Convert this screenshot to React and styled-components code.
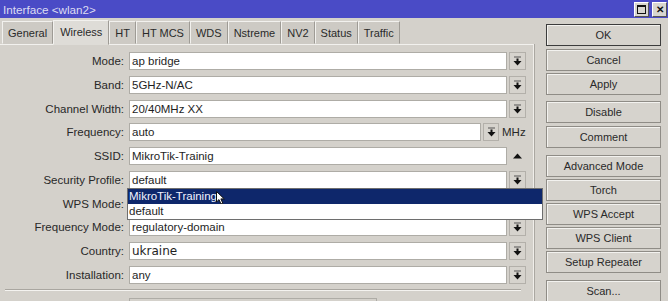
import React from 'react';
import styled, { createGlobalStyle } from 'styled-components';

const GlobalStyle = createGlobalStyle`
  html, body {
    margin: 0;
    padding: 0;
    background: #d4d1cb;
  }
  body {
    font-family: "Liberation Sans", Arial, sans-serif;
  }
`;

const tabs = ['General', 'Wireless', 'HT', 'HT MCS', 'WDS', 'Nstreme', 'NV2', 'Status', 'Traffic'];

const fields = [
    { label: 'Mode', value: 'ap bridge', kind: 'select' },
    { label: 'Band', value: '5GHz-N/AC', kind: 'select' },
    { label: 'Channel Width', value: '20/40MHz XX', kind: 'select' },
    { label: 'Frequency', value: 'auto', kind: 'freq' },
    { label: 'SSID', value: 'MikroTik-Trainig', kind: 'ssid' },
    { label: 'Security Profile', value: 'default', kind: 'select', open: true },
    { label: 'WPS Mode', value: '', kind: 'select' },
    { label: 'Frequency Mode', value: 'regulatory-domain', kind: 'select' },
    { label: 'Country', value: 'ukraine', kind: 'select', big: true },
    { label: 'Installation', value: 'any', kind: 'select', last: true },
];

const buttons = [
    { text: 'OK', after: 3, primary: true },
    { text: 'Cancel', after: 2 },
    { text: 'Apply', after: 6 },
    { text: 'Disable', after: 3 },
    { text: 'Comment', after: 7 },
    { text: 'Advanced Mode', after: 2 },
    { text: 'Torch', after: 2 },
    { text: 'WPS Accept', after: 2 },
    { text: 'WPS Client', after: 2 },
    { text: 'Setup Repeater', after: 7 },
    { text: 'Scan...', after: 0 },
];

const DownIcon = () => (
    <svg width="9" height="10" viewBox="0 0 9 10">
        <rect x="1" y="0.5" width="7" height="1" fill="#555" />
        <rect x="3.5" y="2.5" width="2" height="2.5" fill="#111" />
        <path d="M0.5 5 L8.5 5 L4.5 9.5 Z" fill="#111" />
    </svg>
);

const UpIcon = () => (
    <svg width="9" height="6" viewBox="0 0 9 6">
        <path d="M0 5.5 L9 5.5 L4.5 0.5 Z" fill="#111" />
    </svg>
);

const Cursor = () => (
    <svg width="10" height="14" viewBox="0 0 10 14">
        <path d="M0.5 0.5 L0.5 11 L3 8.6 L5 13 L6.8 12.2 L4.9 7.9 L8.3 7.9 Z" fill="#fff" stroke="#111" strokeWidth="1" />
    </svg>
);

function App() {
    return (
        <Window>
            <GlobalStyle />
            <TitleBar>
                <span>Interface &lt;wlan2&gt;</span>
                <TitleButtons>
                    <TitleButton><MaxBox /></TitleButton>
                    <TitleButton>✕</TitleButton>
                </TitleButtons>
            </TitleBar>
            <Body>
                <LeftPane>
                    <TabRow>
                        {tabs.map((t) => (
                            <Tab key={t} $active={t === 'Wireless'}>{t}</Tab>
                        ))}
                    </TabRow>
                    <Panel>
                        {fields.map((f) => (
                            <Row key={f.label} $tight={f.last}>
                                <Label>{f.label}:</Label>
                                <Field>
                                    <Input $big={f.big}>{f.value}</Input>
                                    {f.kind === 'select' && <DropButton><DownIcon /></DropButton>}
                                    {f.kind === 'freq' && (
                                        <>
                                            <DropButton $narrow><DownIcon /></DropButton>
                                            <Unit>MHz</Unit>
                                        </>
                                    )}
                                    {f.kind === 'ssid' && <ArrowSlot><UpIcon /></ArrowSlot>}
                                    {f.open && (
                                        <DropList>
                                            <DropItem $selected>
                                                MikroTik-Training
                                                <CursorSpot><Cursor /></CursorSpot>
                                            </DropItem>
                                            <DropItem>default</DropItem>
                                        </DropList>
                                    )}
                                </Field>
                            </Row>
                        ))}
                        <Separator />
                        <Row>
                            <Label>Default AP Tx Limit:</Label>
                            <Field>
                                <Input $disabled />
                            </Field>
                        </Row>
                    </Panel>
                </LeftPane>
                <ButtonColumn>
                    {buttons.map((b) => (
                        <SideButton key={b.text} $after={b.after} $primary={b.primary}>{b.text}</SideButton>
                    ))}
                </ButtonColumn>
            </Body>
        </Window>
    );
}

const Window = styled.div`
    width: 668px;
    height: 301px;
    overflow: hidden;
    display: flex;
    flex-direction: column;
    background: #d4d1cb;
    color: #242424;
`;

const TitleBar = styled.div`
    height: 18px;
    flex: none;
    display: flex;
    align-items: center;
    justify-content: space-between;
    padding: 0 1px 0 3px;
    background: #4a4bc6;
    color: #dcdcf2;
    font-size: 11.7px;
`;

const TitleButtons = styled.div`
    display: flex;
    gap: 3px;
`;

const TitleButton = styled.div`
    width: 15px;
    height: 15px;
    box-sizing: border-box;
    display: flex;
    align-items: center;
    justify-content: center;
    background: #d8d6d0;
    border: 1px solid;
    border-color: #fff #555 #555 #fff;
    color: #111;
    font-size: 10px;
    font-weight: bold;
`;

const MaxBox = styled.div`
    width: 9px;
    height: 9px;
    box-sizing: border-box;
    border: 1px solid #111;
    border-top-width: 2px;
`;

const Body = styled.div`
    flex: 1;
    display: flex;
    min-height: 0;
`;

const LeftPane = styled.div`
    width: 534px;
    flex: none;
    display: flex;
    flex-direction: column;
`;

const TabRow = styled.div`
    height: 26px;
    flex: none;
    display: flex;
    align-items: flex-end;
    padding-left: 2px;
`;

const Tab = styled.div`
    height: ${(p) => (p.$active ? '25px' : '23px')};
    box-sizing: border-box;
    display: flex;
    align-items: center;
    padding: ${(p) => (p.$active ? '0 6px 2px' : '0 5px')};
    background: ${(p) => (p.$active ? '#dedcd7' : '#cdcac4')};
    border: 1px solid;
    border-color: #f2f1ee #9e9b95 transparent #f2f1ee;
    font-size: 11px;
    color: #2a2a2a;
    position: relative;
    margin-bottom: ${(p) => (p.$active ? '-1px' : '0')};
    z-index: ${(p) => (p.$active ? 1 : 0)};
`;

const Panel = styled.div`
    flex: 1;
    border-top: 1px solid #f2f1ee;
    border-right: 1px solid #f0eeea;
    box-shadow: 1px 0 0 #aaa7a1;
    padding: 7px 7px 0 0;
    display: flex;
    flex-direction: column;
`;

const Row = styled.div`
    display: grid;
    grid-template-columns: 124px 1fr;
    column-gap: 5px;
    height: 18px;
    flex: none;
    margin-bottom: ${(p) => (p.$tight ? '1px' : '5.75px')};
`;

const Label = styled.div`
    text-align: right;
    line-height: 18px;
    font-size: 11.5px;
    white-space: nowrap;
    color: #282828;
`;

const Field = styled.div`
    display: flex;
    align-items: center;
    gap: 2px;
    height: 18px;
    position: relative;
`;

const Input = styled.div`
    flex: ${(p) => (p.$disabled ? '0 0 248px' : '1')};
    height: 18px;
    box-sizing: border-box;
    padding: 0 2px;
    background: ${(p) => (p.$disabled ? '#d4d1cb' : '#fff')};
    border: 1px solid #aeaca6;
    line-height: 16px;
    white-space: nowrap;
    overflow: hidden;
    font-family: ${(p) => (p.$big ? '"DejaVu Sans", Verdana, sans-serif' : '"Liberation Sans", Arial, sans-serif')};
    font-size: ${(p) => (p.$big ? '12px' : '11.5px')};
    color: #1e1e1e;
`;

const DropButton = styled.div`
    width: ${(p) => (p.$narrow ? '16px' : '17px')};
    height: 18px;
    flex: none;
    box-sizing: border-box;
    display: flex;
    align-items: center;
    justify-content: center;
    background: #d6d3cd;
    border: 1px solid #b3b0aa;
`;

const Unit = styled.div`
    width: 24px;
    flex: none;
    padding-left: 1px;
    font-size: 11.5px;
    color: #282828;
`;

const ArrowSlot = styled.div`
    width: 17px;
    flex: none;
    display: flex;
    justify-content: center;
`;

const DropList = styled.div`
    position: absolute;
    left: -2px;
    top: 17px;
    width: 416px;
    box-sizing: border-box;
    background: #fff;
    border: 1px solid #6e6e6e;
    z-index: 5;
`;

const DropItem = styled.div`
    height: 15px;
    line-height: 15px;
    padding-left: 1px;
    position: relative;
    font-size: 11.5px;
    background: ${(p) => (p.$selected ? '#0e276b' : '#fff')};
    color: ${(p) => (p.$selected ? '#f2f2ff' : '#1e1e1e')};
`;

const CursorSpot = styled.div`
    position: absolute;
    left: 88px;
    top: 2px;
    line-height: 0;
`;

const Separator = styled.div`
    height: 0;
    flex: none;
    margin: 4px 5px 7px 5px;
    border-top: 1px solid #a9a6a0;
    border-bottom: 1px solid #f4f3f0;
`;

const ButtonColumn = styled.div`
    width: 115px;
    margin-left: 12px;
    padding-top: 6px;
    display: flex;
    flex-direction: column;
`;

const SideButton = styled.div`
    height: 22px;
    flex: none;
    box-sizing: border-box;
    margin-bottom: ${(p) => p.$after}px;
    display: flex;
    align-items: center;
    justify-content: center;
    background: #d6d3cd;
    border: 1px solid ${(p) => (p.$primary ? '#3c3c3c' : '#8f8c86')};
    box-shadow: inset 1px 1px 0 #f3f2ef;
    font-size: 11px;
    color: #2a2a2a;
`;

export default App
